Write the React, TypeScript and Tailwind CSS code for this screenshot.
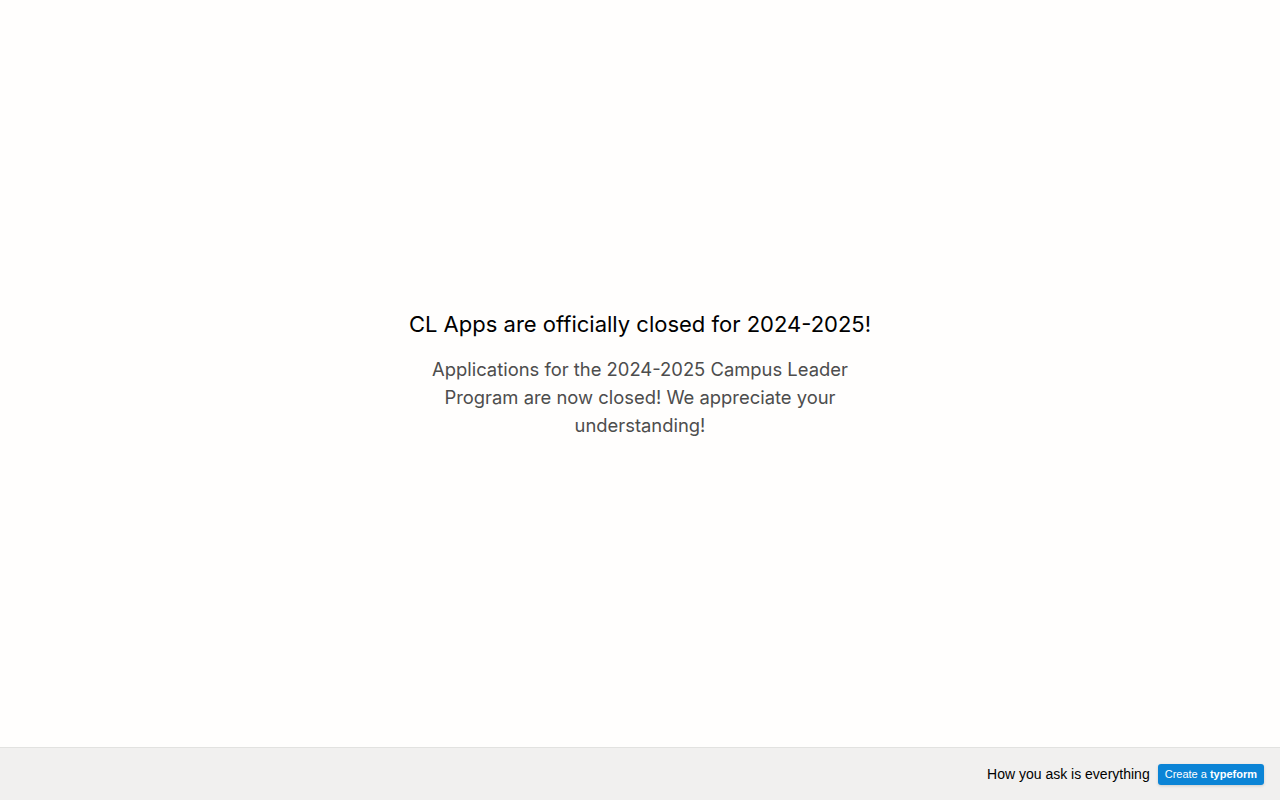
import React from "react";

export default function App() {
  return (
    <div className="w-full h-[800px] flex flex-col bg-[#fffefd]" style={{ fontFamily: "Inter, 'Noto Sans', sans-serif" }}>
      <main className="flex-1 flex flex-col items-center justify-center pb-[1px]">
        <div className="flex flex-col items-center text-center">
          <h1 className="text-[22px] leading-[32px] text-black font-normal">CL Apps are officially closed for 2024-2025!</h1>
          <p className="mt-[15px] w-[440px] text-[18.4px] leading-[28px] text-[#4d4d4d]">
            Applications for the 2024-2025 Campus Leader Program are now closed! We appreciate your understanding!
          </p>
        </div>
      </main>
      <footer className="h-[53px] shrink-0 border-t border-[#e2e2e0] bg-[#f1f0ef] flex items-center justify-end pr-[16px] gap-[8px]" style={{ fontFamily: "'Liberation Sans', Arial, sans-serif" }}>
        <span className="text-[14px] text-black">How you ask is everything</span>
        <a className="h-[21px] px-[7px] rounded-[3px] bg-[#0b84d6] text-white text-[11px] flex items-center shadow-[0_1px_3px_rgba(0,0,0,0.15)]">
          Create a&nbsp;<b className="font-bold">typeform</b>
        </a>
      </footer>
    </div>
  );
}
